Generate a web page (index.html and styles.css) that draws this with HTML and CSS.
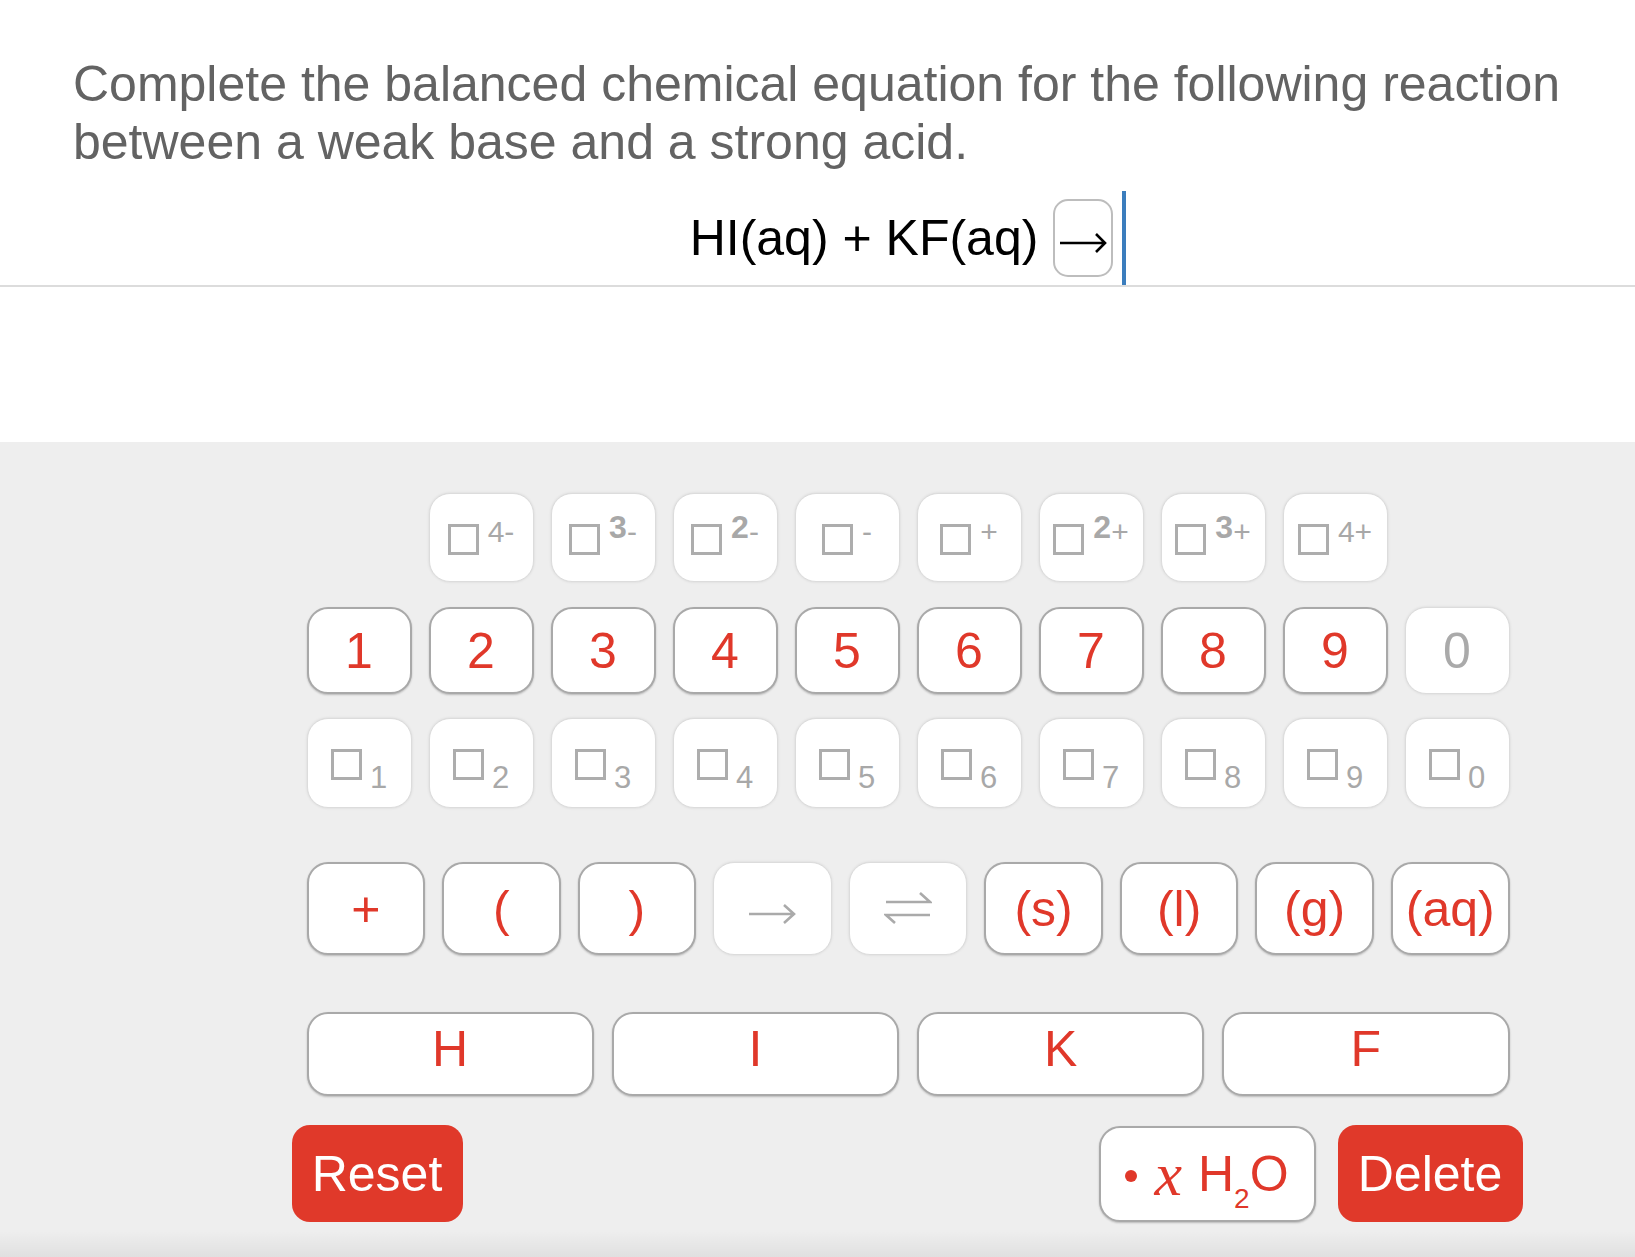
FILE: index.html
```html
<!DOCTYPE html>
<html lang="en">
<head>
<meta charset="utf-8">
<title>Balanced chemical equation</title>
<link rel="stylesheet" href="styles.css">
</head>
<body>
<main class="page">
  <section class="question">
    <p class="prompt">Complete the balanced chemical equation for the following reaction between a weak base and a strong acid.</p>
    <div class="equation">
      <span class="eq-text">HI(aq) + KF(aq)</span>
      <span class="arrow-box">
        <svg class="arrow" width="48" height="22" viewBox="0 0 48 22"><path d="M1 11H46M37 2l9 9-9 9" fill="none" stroke="#000" stroke-width="2.6"/></svg>
      </span>
      <span class="cursor"></span>
    </div>
  </section>

  <section class="keypad-panel">
    <div class="keypad">
      <div class="grid10 r1">
        <button class="key off ion first"><span class="ion-body"><span class="sq"></span><span class="sup">4-</span></span></button>
        <button class="key off ion"><span class="ion-body"><span class="sq"></span><span class="sup"><b class="big">3</b>-</span></span></button>
        <button class="key off ion"><span class="ion-body"><span class="sq"></span><span class="sup"><b class="big">2</b>-</span></span></button>
        <button class="key off ion"><span class="ion-body"><span class="sq"></span><span class="sup">-</span></span></button>
        <button class="key off ion"><span class="ion-body"><span class="sq"></span><span class="sup">+</span></span></button>
        <button class="key off ion"><span class="ion-body"><span class="sq"></span><span class="sup"><b class="big">2</b>+</span></span></button>
        <button class="key off ion"><span class="ion-body"><span class="sq"></span><span class="sup"><b class="big">3</b>+</span></span></button>
        <button class="key off ion"><span class="ion-body"><span class="sq"></span><span class="sup">4+</span></span></button>
      </div>

      <div class="grid10 r2">
        <button class="key">1</button>
        <button class="key">2</button>
        <button class="key">3</button>
        <button class="key">4</button>
        <button class="key">5</button>
        <button class="key">6</button>
        <button class="key">7</button>
        <button class="key">8</button>
        <button class="key">9</button>
        <button class="key off">0</button>
      </div>

      <div class="grid10 r3">
        <button class="key off subkey"><span class="ion-body low"><span class="sq"></span><span class="subd">1</span></span></button>
        <button class="key off subkey"><span class="ion-body low"><span class="sq"></span><span class="subd">2</span></span></button>
        <button class="key off subkey"><span class="ion-body low"><span class="sq"></span><span class="subd">3</span></span></button>
        <button class="key off subkey"><span class="ion-body low"><span class="sq"></span><span class="subd">4</span></span></button>
        <button class="key off subkey"><span class="ion-body low"><span class="sq"></span><span class="subd">5</span></span></button>
        <button class="key off subkey"><span class="ion-body low"><span class="sq"></span><span class="subd">6</span></span></button>
        <button class="key off subkey"><span class="ion-body low"><span class="sq"></span><span class="subd">7</span></span></button>
        <button class="key off subkey"><span class="ion-body low"><span class="sq"></span><span class="subd">8</span></span></button>
        <button class="key off subkey"><span class="ion-body low"><span class="sq"></span><span class="subd">9</span></span></button>
        <button class="key off subkey"><span class="ion-body low"><span class="sq"></span><span class="subd">0</span></span></button>
      </div>

      <div class="row9 r4">
        <button class="key">+</button>
        <button class="key">(</button>
        <button class="key">)</button>
        <button class="key off symbol">
          <svg width="48" height="22" viewBox="0 0 48 22"><path d="M1 11H46M36 2l10 9-10 9" fill="none" stroke="#aaaaaa" stroke-width="2.6"/></svg>
        </button>
        <button class="key off">
          <svg width="48" height="34" viewBox="0 0 48 34"><path d="M2 10H46L36 1M46 23H2L11 31" fill="none" stroke="#aaaaaa" stroke-width="2.6"/></svg>
        </button>
        <button class="key">(s)</button>
        <button class="key">(l)</button>
        <button class="key">(g)</button>
        <button class="key">(aq)</button>
      </div>

      <div class="row4 r5">
        <button class="key element">H</button>
        <button class="key element">I</button>
        <button class="key element">K</button>
        <button class="key element">F</button>
      </div>

      <div class="r6">
        <button class="action reset">Reset</button>
        <span class="spacer"></span>
        <button class="key water"><span class="dot"></span><span class="mathx">x</span><span class="h2o">H<span class="subsmall">2</span>O</span></button>
        <button class="action delete">Delete</button>
      </div>
    </div>
  </section>
</main>
</body>
</html>
```

FILE: styles.css
```css
html, body {
  margin: 0;
  padding: 0;
  background: #ffffff;
}

body {
  font-family: "Liberation Sans", Arial, Helvetica, sans-serif;
}

.page {
  width: 1635px;
  min-height: 1257px;
  display: flex;
  flex-direction: column;
}

.prompt {
  margin: 0;
  padding: 55px 40px 0 73px;
  font-size: 50px;
  line-height: 58px;
  color: #636363;
}

.equation {
  margin-top: 20px;
  height: 94px;
  padding-left: 181px;
  border-bottom: 2px solid #dcdcdc;
  display: flex;
  justify-content: center;
  align-items: center;
}

.eq-text {
  font-size: 50px;
  line-height: 50px;
  color: #000;
  white-space: nowrap;
}

.arrow-box {
  margin-left: 15px;
  width: 60px;
  height: 78px;
  box-sizing: border-box;
  border: 2px solid #bdbdbd;
  border-radius: 15px;
  display: flex;
  align-items: center;
  justify-content: center;
  padding-top: 10px;
}

.arrow {
  display: block;
}

.cursor {
  margin-left: 9px;
  width: 4px;
  height: 94px;
  background: #3b7dbd;
}

.keypad-panel {
  margin-top: 155px;
  flex: 1;
  background-color: #eeeeee;
  background-image: linear-gradient(to bottom, rgba(0,0,0,0) calc(100% - 26px), rgba(0,0,0,0.06));
  padding: 51px 0 0 181px;
  display: flex;
  justify-content: center;
}

.keypad {
  width: 1203px;
  display: flex;
  flex-direction: column;
}

.grid10 {
  display: grid;
  grid-template-columns: repeat(10, 105px);
  column-gap: 17px;
}

.row9 {
  display: grid;
  grid-template-columns: repeat(9, 1fr);
  column-gap: 17px;
}

.row4 {
  display: grid;
  grid-template-columns: repeat(4, 1fr);
  column-gap: 18px;
}

.r1 { height: 89px; }
.r2 { height: 87px; margin-top: 25px; }
.r3 { height: 90px; margin-top: 24px; }
.r4 { height: 93px; margin-top: 54px; }
.r5 { height: 84px; margin-top: 57px; }
.r6 {
  height: 97px;
  margin-top: 29px;
  margin-left: -15px;
  margin-right: -13px;
  display: flex;
}

.key {
  box-sizing: border-box;
  margin: 0;
  padding: 0;
  background: #ffffff;
  border: 2px solid #a9a9a9;
  border-radius: 21px;
  box-shadow: 0 1px 2px rgba(0,0,0,0.22);
  display: flex;
  align-items: center;
  justify-content: center;
  font-family: "Liberation Sans", Arial, Helvetica, sans-serif;
  font-size: 50px;
  line-height: 50px;
  color: #e0382a;
  cursor: pointer;
}

.key.off {
  border: 1px solid #dcdcdc;
  box-shadow: 0 0 3px rgba(0,0,0,0.10);
  color: #aaaaaa;
}

.first {
  grid-column-start: 2;
}

.ion {
  padding-top: 3px;
}

.ion-body {
  display: inline-flex;
  align-items: flex-start;
}

.ion-body.low {
  align-items: flex-end;
}

.sq {
  width: 31px;
  height: 31px;
  box-sizing: border-box;
  border: 3px solid #adadad;
}

.sup {
  margin-left: 9px;
  margin-top: -7px;
  font-size: 30px;
  line-height: 30px;
  color: #a8a8a8;
}

.big {
  font-size: 32px;
  line-height: 0;
  font-weight: bold;
  vertical-align: 4px;
}

.subkey {
  padding-top: 3px;
}

.subd {
  margin-left: 8px;
  margin-bottom: -13px;
  font-size: 31px;
  line-height: 31px;
  color: #a8a8a8;
}

.symbol {
  padding-top: 10px;
}

.element {
  padding-bottom: 11px;
}

.spacer {
  flex: 1;
}

.action {
  box-sizing: border-box;
  margin: 0;
  padding: 0;
  border: none;
  border-radius: 18px;
  background: #e0392a;
  color: #ffffff;
  font-family: "Liberation Sans", Arial, Helvetica, sans-serif;
  font-size: 50px;
  line-height: 50px;
  display: flex;
  align-items: center;
  justify-content: center;
  cursor: pointer;
}

.reset {
  width: 171px;
}

.delete {
  width: 185px;
  margin-left: 22px;
}

.water {
  width: 217px;
  height: 96px;
  align-self: flex-start;
  margin-top: 1px;
}

.dot {
  width: 12px;
  height: 12px;
  border-radius: 50%;
  background: #e0382a;
  margin-top: 4px;
}

.mathx {
  margin-left: 17px;
  font-family: "Liberation Serif", "Times New Roman", serif;
  font-style: italic;
  font-size: 62px;
  line-height: 50px;
  color: #e0382a;
}

.h2o {
  margin-left: 16px;
  font-size: 50px;
  line-height: 50px;
  white-space: nowrap;
}

.subsmall {
  font-size: 28px;
  line-height: 0;
  vertical-align: -17px;
}
```
